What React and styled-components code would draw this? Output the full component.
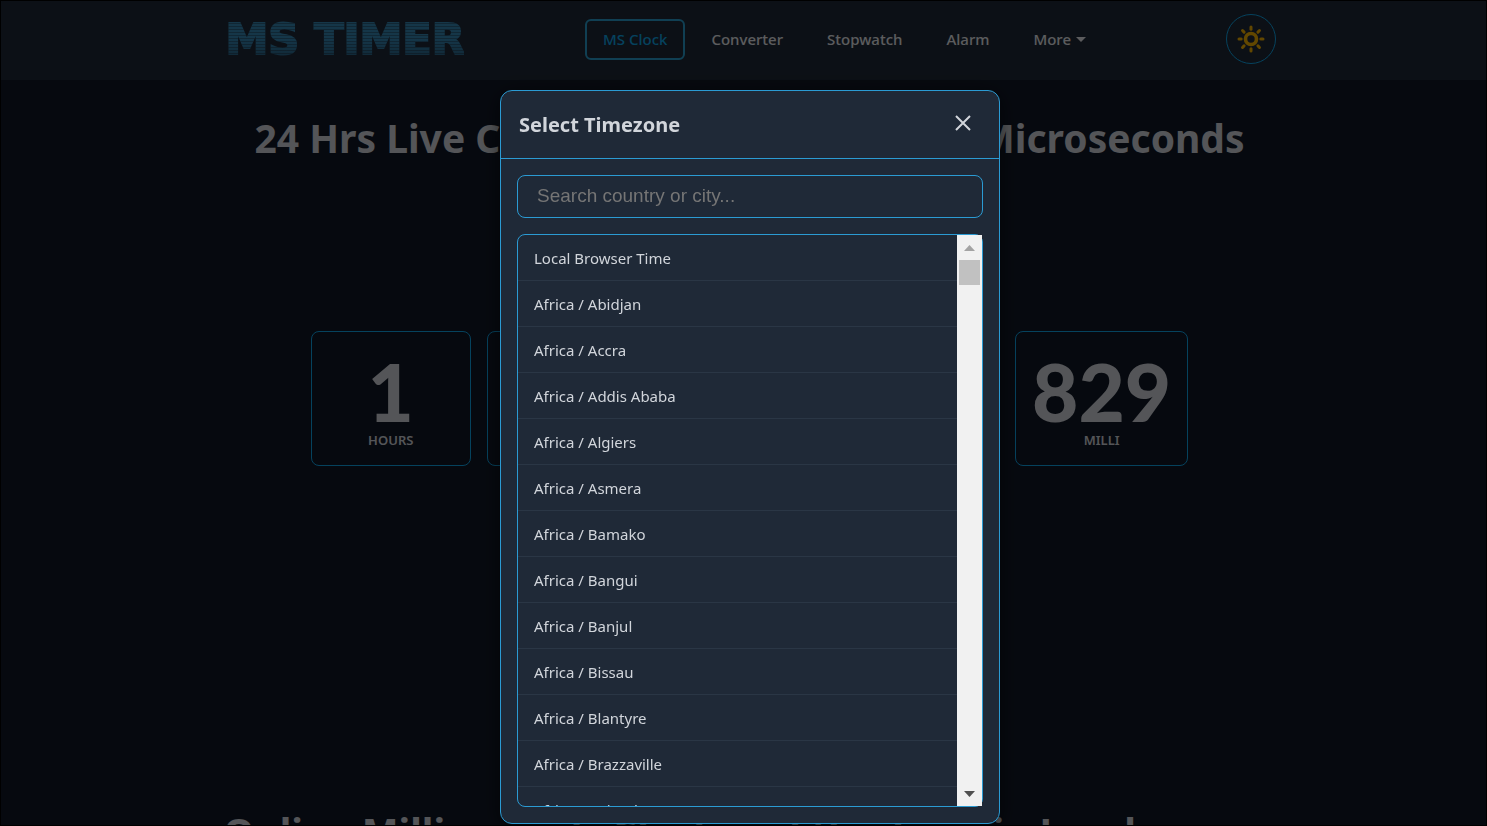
import React, { useState } from "react"
import styled, { createGlobalStyle } from "styled-components"

const GlobalStyle = createGlobalStyle`
  * {
    box-sizing: border-box;
  }

  body {
    margin: 0;
    background: #000;
    color: #d1d5db;
    font-family: "Noto Sans", "Open Sans", sans-serif;
    font-size: 15px;
  }
`

const Page = styled.div`
  height: 100vh;
  overflow: hidden;
  border: 1px solid #000;
  background: #111827;
`

const NavBar = styled.header`
  height: 79px;
  padding-left: 12px;
  background: #1f2937;
`

const NavInner = styled.div`
  display: flex;
  align-items: center;
  justify-content: space-between;
  max-width: 1052px;
  height: 76px;
  margin: 0 auto;
`

const Logo = styled.a`
  width: 240px;
  padding-left: 2px;
  font-family: "DejaVu Sans", sans-serif;
  font-size: 43px;
  font-weight: 700;
  line-height: 48px;
  white-space: nowrap;
  text-decoration: none;
  color: transparent;
  background: repeating-linear-gradient(
      to bottom,
      transparent 0 2px,
      rgba(31, 41, 55, 0.4) 2px 3px
    ),
    linear-gradient(to bottom, #3587b5 50%, #265a7c 100%);
  background-clip: text;
  -webkit-text-stroke: 2px transparent;
`

const NavLinks = styled.nav`
  display: flex;
  gap: 8px;
`

const NavLink = styled.a`
  display: flex;
  align-items: center;
  gap: 5px;
  height: 41px;
  padding: 0 16px;
  border: 2px solid ${props => (props.$active ? "#2a9fd0" : "transparent")};
  border-radius: 6px;
  color: ${props => (props.$active ? "#0ea5e9" : "#e5e7eb")};
  font-weight: 500;
  text-decoration: none;
  white-space: nowrap;
`

const Caret = styled.span`
  border: 5px solid transparent;
  border-top-color: currentColor;
  border-bottom: 0;
`

const ThemeButton = styled.button`
  display: flex;
  align-items: center;
  justify-content: center;
  width: 50px;
  height: 50px;
  padding: 0;
  border: 1px solid #0ea5e9;
  border-radius: 50%;
  background: transparent;
  color: #f5b100;
`

const Main = styled.main`
  padding-left: 12px;
`

const Title = styled.h1`
  margin: 28px 0 0;
  font-size: 39px;
  line-height: 60px;
  text-align: center;
  white-space: nowrap;
`

const Clock = styled.div`
  display: flex;
  justify-content: center;
  gap: 16px;
  margin-top: 163px;
`

const ClockCard = styled.div`
  display: flex;
  flex-direction: column;
  align-items: center;
  justify-content: center;
  min-width: 160px;
  height: 135px;
  padding: 2px 16px 0;
  border: 1px solid #0ea5e9;
  border-radius: 8px;
`

const ClockValue = styled.div`
  font-family: Lato, "Noto Sans", sans-serif;
  font-size: 80px;
  font-weight: 900;
  line-height: 80px;
`

const ClockLabel = styled.div`
  font-size: 13px;
  font-weight: 600;
  line-height: 18px;
`

const SubTitle = styled.h2`
  max-width: 1052px;
  margin: 336px auto 0;
  font-size: 39px;
  line-height: 60px;
  white-space: nowrap;
`

const Overlay = styled.div`
  position: fixed;
  inset: 0;
  display: flex;
  justify-content: center;
  padding: 90px 0 2px 13px;
  border: 1px solid #000;
  border-top: 0;
  border-bottom: 0;
  background: rgba(0, 0, 0, 0.6);
`

const Modal = styled.section`
  display: flex;
  flex-direction: column;
  width: 100%;
  max-width: 500px;
  border: 1px solid #2b9bd3;
  border-radius: 12px;
  background: #1f2937;
  box-shadow: 0 4px 20px rgba(0, 0, 0, 0.6);
`

const ModalHeader = styled.div`
  display: flex;
  align-items: center;
  justify-content: space-between;
  height: 68px;
  padding: 0 20px 0 18px;
  border-bottom: 1px solid #2b9bd3;
`

const ModalTitle = styled.h2`
  margin: 0;
  font-size: 20px;
`

const CloseButton = styled.button`
  display: flex;
  padding: 8px 8px 12px;
  border: 0;
  background: transparent;
  color: #d1d5db;
`

const ModalBody = styled.div`
  display: flex;
  flex: 1;
  flex-direction: column;
  gap: 16px;
  min-height: 0;
  padding: 16px;
`

const SearchInput = styled.input`
  flex: none;
  height: 43px;
  padding: 0 19px 2px;
  border: 1px solid #2b9bd3;
  border-radius: 8px;
  background: transparent;
  color: #d1d5db;
  font-family: "Liberation Sans", Arial, sans-serif;
  font-size: 19px;

  &::placeholder {
    color: #757575;
  }
`

const ListBox = styled.div`
  display: flex;
  flex: 1;
  min-height: 0;
  border: 1px solid #2b9bd3;
  border-radius: 8px;
`

const ZoneList = styled.ul`
  flex: 1;
  margin: 0;
  padding: 0;
  overflow: hidden;
  border-radius: 7px 0 0 7px;
  list-style: none;
`

const ZoneItem = styled.li`
  height: 46px;
  padding: 0 16px;
  border-bottom: 1px solid #2a3645;
  line-height: 46px;
`

const ScrollTrack = styled.div`
  display: flex;
  flex-direction: column;
  align-items: center;
  width: 25px;
  background: #f1f1f1;
`

const ScrollArrow = styled.div`
  display: flex;
  align-items: center;
  justify-content: center;
  height: 25px;
  margin-top: ${props => (props.$down ? "auto" : 0)};
  color: ${props => (props.$down ? "#505050" : "#a3a3a3")};
`

const ScrollThumb = styled.div`
  width: 21px;
  height: 25px;
  background: #c1c1c1;
`

const links = [
  { name: "MS Clock", href: "#clock", active: true },
  { name: "Converter", href: "#converter" },
  { name: "Stopwatch", href: "#stopwatch" },
  { name: "Alarm", href: "#alarm" },
  { name: "More", href: "#more", menu: true },
]

const units = [
  { value: "1", label: "HOURS" },
  { value: "24", label: "MINUTES" },
  { value: "36", label: "SECONDS" },
  { value: "PM", label: "AM/PM" },
  { value: "829", label: "MILLI" },
]

const zones = [
  "Local Browser Time",
  "Africa / Abidjan",
  "Africa / Accra",
  "Africa / Addis Ababa",
  "Africa / Algiers",
  "Africa / Asmera",
  "Africa / Bamako",
  "Africa / Bangui",
  "Africa / Banjul",
  "Africa / Bissau",
  "Africa / Blantyre",
  "Africa / Brazzaville",
  "Africa / Bujumbura",
]

const SunIcon = () => (
  <svg
    width="28"
    height="28"
    viewBox="0 0 28 28"
    fill="none"
    stroke="currentColor"
    strokeWidth="3"
  >
    <circle cx="14" cy="14" r="5.5" strokeWidth="3.6" />
    {[0, 45, 90, 135, 180, 225, 270, 315].map(angle => (
      <path
        key={angle}
        d="M14 2v2.2"
        strokeLinecap="round"
        transform={`rotate(${angle} 14 14)`}
      />
    ))}
  </svg>
)

const App = () => {
  const [search, setSearch] = useState("")
  const shown = zones.filter(zone =>
    zone.toLowerCase().includes(search.toLowerCase())
  )

  return (
    <>
      <GlobalStyle />
      <Page>
        <NavBar>
          <NavInner>
            <Logo href="#home">MS TIMER</Logo>
            <NavLinks>
              {links.map(link => (
                <NavLink key={link.name} href={link.href} $active={link.active}>
                  {link.name}
                  {link.menu && <Caret />}
                </NavLink>
              ))}
            </NavLinks>
            <ThemeButton aria-label="Toggle theme">
              <SunIcon />
            </ThemeButton>
          </NavInner>
        </NavBar>
        <Main>
          <Title>24 Hrs Live Clock with Milliseconds & Microseconds</Title>
          <Clock>
            {units.map(unit => (
              <ClockCard key={unit.label}>
                <ClockValue>{unit.value}</ClockValue>
                <ClockLabel>{unit.label}</ClockLabel>
              </ClockCard>
            ))}
          </Clock>
          <SubTitle>Online Milliseconds Clock and the Time in London</SubTitle>
        </Main>
      </Page>
      <Overlay>
        <Modal role="dialog" aria-labelledby="zone-title">
          <ModalHeader>
            <ModalTitle id="zone-title">Select Timezone</ModalTitle>
            <CloseButton aria-label="Close">
              <svg width="16" height="16" viewBox="0 0 16 16" stroke="currentColor">
                <path d="M1 1l14 14M15 1L1 15" strokeWidth="2" />
              </svg>
            </CloseButton>
          </ModalHeader>
          <ModalBody>
            <SearchInput
              type="text"
              aria-label="Search country or city"
              placeholder="Search country or city..."
              value={search}
              onChange={e => setSearch(e.target.value)}
            />
            <ListBox>
              <ZoneList>
                {shown.map(zone => (
                  <ZoneItem key={zone}>{zone}</ZoneItem>
                ))}
              </ZoneList>
              <ScrollTrack>
                <ScrollArrow>
                  <svg width="11" height="6" viewBox="0 0 11 6" fill="currentColor">
                    <path d="M0 6L5.5 0L11 6z" />
                  </svg>
                </ScrollArrow>
                <ScrollThumb />
                <ScrollArrow $down>
                  <svg width="11" height="6" viewBox="0 0 11 6" fill="currentColor">
                    <path d="M0 0L5.5 6L11 0z" />
                  </svg>
                </ScrollArrow>
              </ScrollTrack>
            </ListBox>
          </ModalBody>
        </Modal>
      </Overlay>
    </>
  )
}

export default App
